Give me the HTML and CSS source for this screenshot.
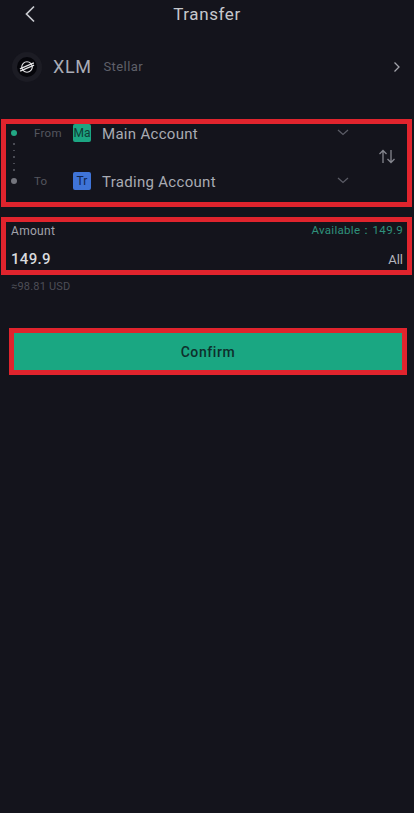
FILE: index.html
```html
<!DOCTYPE html>
<html lang="en">
<head>
<meta charset="utf-8">
<title>Transfer</title>
<link rel="stylesheet" href="styles.css">
</head>
<body>
<div class="page">
  <header class="header">
    <svg class="back" width="12" height="18" viewBox="0 0 12 18"><path d="M10 1.500 2.500 9l7.500 7.500" fill="none" stroke="#c9cbd0" stroke-width="1.700"/></svg>
    <h1 class="title">Transfer</h1>
  </header>
  <section class="coin">
    <span class="coin-halo"><span class="coin-logo">
      <svg width="16" height="16" viewBox="0 0 14 14"><circle cx="7" cy="7" r="4.600" fill="none" stroke="#e4e4e6" stroke-width="1"/><path d="M.8 8.600 13 3.400M1 10.600 13.200 5.400" stroke="#e4e4e6" stroke-width="1.100" fill="none"/></svg>
    </span></span>
    <span class="coin-code">XLM</span>
    <span class="coin-name">Stellar</span>
    <svg class="coin-more" width="8" height="12" viewBox="0 0 8 12"><path d="M1.500 1.500 6 6l-4.500 4.500" fill="none" stroke="#a3a4ab" stroke-width="1.300"/></svg>
  </section>
  <section class="box accounts">
    <div class="rail">
      <span class="dot dot-green"></span>
      <span class="dots"><i></i><i></i><i></i><i></i><i></i></span>
      <span class="dot dot-grey"></span>
    </div>
    <div class="rows">
      <div class="row">
        <span class="row-label">From</span>
        <span class="badge badge-green">Ma</span>
        <span class="row-name">Main Account</span>
        <svg class="caret" width="12" height="7" viewBox="0 0 12 7"><path d="M1 1l5 4.500L11 1" fill="none" stroke="#5b5c66" stroke-width="1.300"/></svg>
      </div>
      <div class="row">
        <span class="row-label">To</span>
        <span class="badge badge-blue">Tr</span>
        <span class="row-name">Trading Account</span>
        <svg class="caret" width="12" height="7" viewBox="0 0 12 7"><path d="M1 1l5 4.500L11 1" fill="none" stroke="#5b5c66" stroke-width="1.300"/></svg>
      </div>
    </div>
    <svg class="swap" width="18" height="15" viewBox="0 0 18 15"><path d="M5 14V1.500M1.500 5 5 1.500 8.500 5M13 1v12.500M9.500 10l3.500 3.500 3.500-3.500" fill="none" stroke="#85868e" stroke-width="1.300"/></svg>
  </section>
  <section class="box amount">
    <div class="amount-top">
      <span class="amount-label">Amount</span>
      <span class="available">Available：149.9</span>
    </div>
    <div class="amount-main">
      <span class="amount-value">149.9</span>
      <span class="amount-all">All</span>
    </div>
  </section>
  <p class="usd">≈98.81 USD</p>
  <div class="confirm-frame">
    <button class="confirm" type="button">Confirm</button>
  </div>
</div>
</body>
</html>
```
FILE: styles.css
```css
* { box-sizing: border-box; }
html, body { margin: 0; padding: 0; }
body { background: #14141c; font-family: Roboto, "Noto Sans", sans-serif; }
.page { width: 414px; height: 813px; overflow: hidden; display: flex; flex-direction: column; }

.header { height: 28px; position: relative; display: flex; align-items: center; justify-content: center; }
.back { position: absolute; left: 24px; top: 5px; }
.title { margin: 0; font-size: 17px; font-weight: 400; letter-spacing: 0.6px; color: #c6c8cd; }

.coin { height: 77px; display: flex; align-items: center; padding: 0 12px; }
.coin-halo { width: 30px; height: 30px; border-radius: 50%; background: #1c1c24; display: flex; align-items: center; justify-content: center; }
.coin-logo { width: 20px; height: 20px; border-radius: 50%; background: #05050a; display: flex; align-items: center; justify-content: center; }
.coin-code { margin-left: 11px; font-size: 18px; color: #a9acb6; letter-spacing: 0.6px; }
.coin-name { margin-left: 12px; font-size: 13px; color: #5f6069; letter-spacing: 0.4px; }
.coin-more { margin-left: auto; margin-right: 1px; }

.box { margin: 0 2px 0 1px; border: 5px solid #e0242d; }
.accounts { margin-top: 14px; height: 88px; display: flex; align-items: flex-start; position: relative; }
.rail { width: 16px; height: 54px; margin-top: 6px; display: flex; flex-direction: column; align-items: center; justify-content: space-between; }
.dot { width: 6px; height: 6px; border-radius: 50%; flex: none; }
.dot-green { background: #22a884; }
.dot-grey { background: #74757d; }
.dots { display: flex; flex-direction: column; gap: 5px; }
.dots i { display: block; width: 1.500px; height: 1.500px; background: #4a4b54; }
.rows { flex: 1; display: flex; flex-direction: column; gap: 30px; }
.row { display: flex; align-items: center; height: 18px; }
.row-label { width: 50px; padding-left: 12px; font-size: 11.5px; color: #55565f; letter-spacing: 0.3px; flex: none; }
.badge { width: 18px; height: 18px; margin-left: 1px; border-radius: 2px; font-size: 12px; display: flex; align-items: center; justify-content: center; flex: none; }
.badge-green { background: #1ca582; color: #0f3d36; }
.badge-blue { background: #3f74d8; color: #10244d; }
.row-name { margin-left: 11px; padding-top: 1px; font-size: 15px; color: #a9abb3; letter-spacing: 0.3px; }
.caret { margin-left: auto; margin-right: 58px; margin-top: -2px; }
.swap { position: absolute; left: 372px; top: 25px; }

.amount { margin-top: 10px; height: 58px; padding: 1px 4px 0 5px; }
.amount-top { display: flex; justify-content: space-between; align-items: center; height: 15px; }
.amount-label { font-size: 12px; color: #a2a3ab; letter-spacing: 0.3px; }
.available { font-size: 11.5px; color: #2f917b; letter-spacing: 0.3px; }
.amount-main { display: flex; justify-content: space-between; align-items: center; margin-top: 12px; height: 18px; }
.amount-value { font-size: 15px; font-weight: 500; color: #d9dade; letter-spacing: 0.3px; }
.amount-all { font-size: 13px; color: #b5b6bc; }

.usd { margin: 4px 0 0 11px; height: 16px; line-height: 16px; font-size: 11px; color: #4d4e57; letter-spacing: 0.2px; }

.confirm-frame { margin: 33px 7px 0 9px; height: 47px; border: 5px solid #e0242d; }
.confirm { display: block; width: 100%; height: 100%; padding: 0; border: 0; background: #1aa782; color: #0e2f2c; font: 500 14px Roboto, "Noto Sans", sans-serif; letter-spacing: 0.6px; }
```
